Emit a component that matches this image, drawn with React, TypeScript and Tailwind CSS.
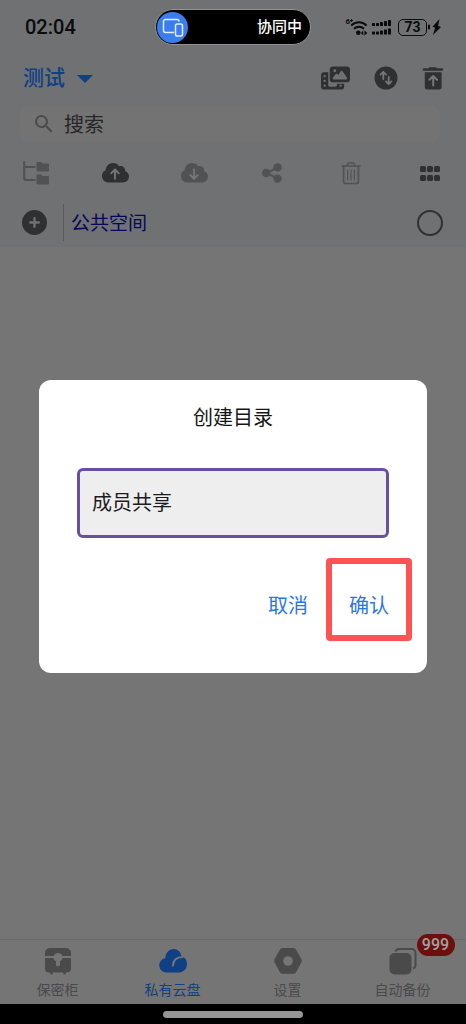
import { useState } from 'react';
import type { ReactNode } from 'react';
import { FaPhotoFilm, FaCirclePlus } from 'react-icons/fa6';
import { MdSearch } from 'react-icons/md';

function SwapIcon() {
  return (
    <svg viewBox="0 0 24 24" className="size-6">
      <circle cx="12" cy="12" r="11.5" fill="currentColor" />
      <g fill="none" stroke="#747678" strokeWidth="1.8" strokeLinecap="round" strokeLinejoin="round">
        <path d="M9.3 13V6.3M6.5 8.6l2.8-2.8 2.8 2.8" />
        <path d="M14.7 11v6.7M11.9 15.4l2.8 2.8 2.8-2.8" />
      </g>
    </svg>
  );
}

function RestoreIcon() {
  return (
    <svg viewBox="0 0 22 24" className="h-6 w-[22px]">
      <path d="M7.5 1.2h6.4l.8 1h5.2a1.3 1.3 0 0 1 0 2.6H2a1.3 1.3 0 0 1 0-2.6h4.7z" fill="currentColor" />
      <path d="M2.8 6.2h16.8v15a2.3 2.3 0 0 1-2.3 2.3H5.1a2.3 2.3 0 0 1-2.3-2.3z" fill="currentColor" />
      <path d="M11.2 19.5v-9M7.4 13.8l3.8-3.8 3.8 3.8" fill="none" stroke="#747678" strokeWidth="2" strokeLinecap="round" strokeLinejoin="round" />
    </svg>
  );
}

function FolderTreeIcon() {
  return (
    <svg viewBox="0 0 26 24" className="h-6 w-[26px]" fill="currentColor">
      <path d="M1.2 1.200V17a2 2 0 0 0 2 2h8.500M1.200 6h10.500" fill="none" stroke="currentColor" strokeWidth="2.200" strokeLinecap="round" />
      <path d="M14.500 1h3.700l1.600 1.500H25a1 1 0 0 1 1 1V9.500a1 1 0 0 1-1 1H14.500a1 1 0 0 1-1-1V2a1 1 0 0 1 1-1z" />
      <path d="M14.500 13.500h3.700l1.600 1.500H25a1 1 0 0 1 1 1v6.500a1 1 0 0 1-1 1H14.500a1 1 0 0 1-1-1v-8a1 1 0 0 1 1-1z" />
    </svg>
  );
}

function CloudArrowIcon({ down }: { down?: boolean }) {
  return (
    <svg viewBox="0 0 28 22" className="h-[22px] w-7">
      <path d="M7 20.500A6.500 6.500 0 0 1 4.600 8.200C5 4 8 1 12 1c2.600 0 4.800 1.200 6.200 3.200 3.400-.7 6.200 1.600 6 4.800 2.300.9 3.800 3 3.800 5.500a6 6 0 0 1-6 6z" fill="currentColor" />
      <path
        d={down ? 'M14 7.500v9M10.200 13l3.800 3.800 3.800-3.800' : 'M14 16.800v-9M10.200 11.300 14 7.500l3.800 3.800'}
        fill="none"
        stroke="#747678"
        strokeWidth="1.900"
        strokeLinecap="round"
        strokeLinejoin="round"
      />
    </svg>
  );
}

function ShareIcon() {
  return (
    <svg viewBox="0 0 20 20" className="size-5" fill="currentColor">
      <path d="M15.500 4.500 4.500 10l11 5.500" fill="none" stroke="currentColor" strokeWidth="2" />
      <circle cx="4.200" cy="10" r="4.200" />
      <circle cx="15.600" cy="4.400" r="4.200" />
      <circle cx="15.600" cy="15.600" r="4.200" />
    </svg>
  );
}

function TrashIcon() {
  return (
    <svg viewBox="0 0 20 24" className="h-6 w-5" fill="none" stroke="currentColor" strokeLinecap="round" strokeLinejoin="round">
      <path d="M1 5h18" strokeWidth="1.6" />
      <path d="M6 4.6 7.2 2h5.6L14 4.6" strokeWidth="1.4" />
      <path d="M2.6 5.2v15.3a2 2 0 0 0 2 2h10.8a2 2 0 0 0 2-2V5.2" strokeWidth="1.7" />
      <path d="M6.6 9v10M10 9v10M13.4 9v10" strokeWidth="1.2" />
    </svg>
  );
}

function GridIcon() {
  return (
    <svg viewBox="0 0 20 15" className="h-[15px] w-5" fill="currentColor">
      {[0, 7, 14].map((x) => (
        <g key={x}>
          <rect x={x} y="0" width="6" height="6" rx="1.5" />
          <rect x={x} y="9" width="6" height="6" rx="1.5" />
        </g>
      ))}
    </svg>
  );
}

function ChestIcon() {
  return (
    <svg viewBox="0 0 28 28" className="size-7" fill="currentColor">
      <path d="M6 1h16a5 5 0 0 1 5 5v3h-8.800a4.500 4.500 0 0 0-8.400 0H1V6a5 5 0 0 1 5-5z" />
      <path d="M1 11h8.500c.3 1.500 1.200 2.700 2.500 3.300v3.200a2 2 0 0 0 4 0v-3.200c1.300-.6 2.200-1.800 2.500-3.300H27v10.500a4 4 0 0 1-4 4h-1l-.7 2h-1.600l-.7-2H9l-.7 2H6.700l-.7-2H5a4 4 0 0 1-4-4z" />
    </svg>
  );
}

function CloudIcon() {
  return (
    <svg viewBox="0 0 28 28" className="size-7">
      <path d="M7 25.500A7.200 7.200 0 0 1 6.300 11.200C6.500 6 10 2 14.500 2c4 0 7.200 3 8 7.200 3.200.6 5.500 4 5.500 7.600 0 5-3.500 8.700-8 8.700z" fill="currentColor" />
      <path d="M14 18.500c0-5.200 3.500-8.600 9.500-8.600" fill="none" stroke="#757575" strokeWidth="2" strokeLinecap="round" />
    </svg>
  );
}

function NutIcon() {
  return (
    <svg viewBox="0 0 28 28" className="size-7">
      <path
        fill="currentColor"
        fillRule="evenodd"
        d="M8.500 1h11a3 3 0 0 1 2.600 1.500l5.300 9.800a3 3 0 0 1 0 3l-5.300 10a3 3 0 0 1-2.600 1.500h-11a3 3 0 0 1-2.600-1.500L.6 15.300a3 3 0 0 1 0-3l5.300-9.800A3 3 0 0 1 8.500 1zM14 9.200a4.800 4.800 0 1 0 0 9.600 4.800 4.800 0 0 0 0-9.600z"
      />
    </svg>
  );
}

function CopiesIcon() {
  return (
    <svg viewBox="0 0 28 28" className="size-7">
      <rect x=".5" y="6" width="22" height="21.500" rx="5" fill="currentColor" />
      <path d="M6.500 4.500A4 4 0 0 1 10 2h12.500a4 4 0 0 1 4 4v12a4 4 0 0 1-2.500 3.600" fill="none" stroke="currentColor" strokeWidth="2" />
    </svg>
  );
}

function StatusBar() {
  return (
    <div className="grid h-[54px] grid-cols-[1fr_auto_1fr] items-center pr-[25px] pl-[25px]">
      <span className="text-xl font-medium text-[#0b0b0c]">02:04</span>
      <div className="flex h-9 w-[156px] items-center justify-between rounded-full border border-[#929292] bg-black pr-2 pl-px">
        <span className="flex size-[31px] items-center justify-center rounded-full bg-[#3b7df0]">
          <svg viewBox="0 0 22 20" className="h-5 w-[22px]" fill="none" stroke="#e4eeff" strokeWidth="1.500">
            <path d="M12 15.500H3.500a2 2 0 0 1-2-2v-9a2 2 0 0 1 2-2H15a2 2 0 0 1 2 2" />
            <rect x="13.500" y="7" width="7" height="12" rx="1.800" />
          </svg>
        </span>
        <span className="text-[15px] font-medium text-white">协同中</span>
      </div>
      <div className="flex items-center justify-end text-[#0b0b0c]">
        <span className="self-start text-[8px] leading-none font-bold">6</span>
        <svg viewBox="0 0 18 18" className="mr-1 h-[18px] w-[18px]" fill="none" stroke="currentColor">
          <path d="M0 2.500h3M1.500 1v3" strokeWidth=".9" />
          <path d="M1.200 7.600c4.200-4.400 11.200-4.400 15.400 0" strokeWidth="2" />
          <path d="M4 10.800c2.900-2.800 7.100-2.800 10 0" strokeWidth="2" />
          <circle cx="8.300" cy="14.800" r="2.300" fill="currentColor" stroke="none" />
          <path d="m13.300 12.600-2.300 2.400 2.300 2.400zM14.500 12.600l2.800 2.400-2.800 2.400z" fill="currentColor" stroke="none" />
        </svg>
        <svg viewBox="0 0 20 16" className="mr-1.5 h-4 w-5" fill="currentColor">
          {[3, 3, 4, 5, 6].map((h, i) => (
            <g key={i}>
              <rect x={i * 4} y={7 - h} width="3" height={h} rx=".6" />
              <rect x={i * 4} y={15.500 - h} width="3" height={h} rx=".6" />
            </g>
          ))}
        </svg>
        <span className="flex h-[17px] w-[29px] items-center justify-center rounded-[5px] border border-current text-sm font-bold">73</span>
        <svg viewBox="0 0 14 18" className="h-[18px] w-[14px]" fill="currentColor">
          <rect x="1" y="6.500" width="2" height="5" rx="1" />
          <path d="M12.500 1 5.500 8.800l2.600 1L6 17l8-8-2.800-1z" />
        </svg>
      </div>
    </div>
  );
}

function ToolButton({ label, active, children }: { label: string; active?: boolean; children: ReactNode }) {
  return (
    <button
      type="button"
      aria-label={label}
      className={`flex h-7 w-7 items-center justify-center ${active ? 'text-[#2f3032]' : 'text-[#515253]'}`}
    >
      {children}
    </button>
  );
}

const tabs = [
  { name: '保密柜', icon: <ChestIcon /> },
  { name: '私有云盘', icon: <CloudIcon />, active: true },
  { name: '设置', icon: <NutIcon /> },
  { name: '自动备份', icon: <CopiesIcon />, badge: 999 },
];

export default function App() {
  const [folderName, setFolderName] = useState('成员共享');

  return (
    <div className="relative flex min-h-screen flex-col bg-[#757575] font-['Roboto','Noto_Sans_CJK_SC',sans-serif]">
      <header className="bg-[#6f7173] pb-1.5">
        <StatusBar />

        <div className="flex h-12 items-center justify-between pr-[22px] pl-[23px]">
          <button type="button" className="flex items-center gap-3 pt-0.5 text-[21px] font-medium text-[#0f3f85]">
            测试
            <svg viewBox="0 0 16 8" className="h-2 w-4" fill="currentColor">
              <path d="M0 0h16L8 8z" />
            </svg>
          </button>
          <div className="flex items-center gap-6 text-[#2f3032]">
            <button type="button" aria-label="相册"><FaPhotoFilm className="h-6 w-[29px]" /></button>
            <button type="button" aria-label="传输"><SwapIcon /></button>
            <button type="button" aria-label="回收站"><RestoreIcon /></button>
          </div>
        </div>

        <label className="mr-[26px] ml-5 mt-1 flex h-9 items-center gap-2 rounded-lg bg-[#737373] pl-3">
          <MdSearch className="size-6 text-[#4b4b4b]" />
          <input
            type="text"
            aria-label="搜索"
            placeholder="搜索"
            className="min-w-0 flex-1 bg-transparent pt-0.5 text-xl outline-none placeholder:text-[#262628]"
          />
        </label>

        <div className="flex h-[62px] items-center justify-between px-[22px]">
          <ToolButton label="目录"><FolderTreeIcon /></ToolButton>
          <ToolButton label="上传" active><CloudArrowIcon /></ToolButton>
          <ToolButton label="下载"><CloudArrowIcon down /></ToolButton>
          <ToolButton label="分享"><ShareIcon /></ToolButton>
          <ToolButton label="删除"><TrashIcon /></ToolButton>
          <ToolButton label="视图" active><GridIcon /></ToolButton>
        </div>

        <div className="flex h-[37px] items-center pr-[23px] pl-[22px]">
          <button type="button" aria-label="新建" className="text-[#2f3032]">
            <FaCirclePlus className="size-[25px]" />
          </button>
          <span className="ml-4 flex h-full flex-1 items-center border-l border-[#58595b] pt-1 pl-[7px] text-[19px] text-[#06065c]">
            公共空间
          </span>
          <input
            type="checkbox"
            aria-label="选择公共空间"
            className="size-[26px] appearance-none rounded-full border-2 border-[#2f3032]"
          />
        </div>
      </header>

      <main className="flex-1" />

      <nav className="flex h-[65px] border-t border-[#6a6a6a] pr-1.5">
        {tabs.map((tab) => (
          <a
            key={tab.name}
            href="#"
            className={`relative flex flex-1 flex-col items-center gap-[5px] pt-[7px] text-sm ${tab.active ? 'text-[#0f3f85]' : 'text-[#4a4a4a]'}`}
          >
            {tab.icon}
            {tab.name}
            {tab.badge && (
              <span className="absolute -top-1.5 left-1/2 ml-3.5 flex h-[22px] w-[38px] items-center justify-center rounded-full bg-[#6b0f0f] text-base font-medium text-[#a5a0a0]">
                {tab.badge}
              </span>
            )}
          </a>
        ))}
      </nav>
      <footer className="flex h-5 items-center justify-center bg-black">
        <span className="h-[7px] w-[140px] rounded-full bg-[#969696]" />
      </footer>

      {/* Create folder dialog */}
      <div className="absolute inset-0 flex items-center justify-center px-[39px] pt-12 pb-5">
        <form
          role="dialog"
          aria-labelledby="dialog-title"
          onSubmit={(e) => e.preventDefault()}
          className="w-full rounded-xl bg-white px-[38px] pt-6 pb-8"
        >
          <h2 id="dialog-title" className="text-center text-xl leading-7 text-[#161616]">创建目录</h2>
          <input
            type="text"
            aria-labelledby="dialog-title"
            value={folderName}
            onChange={(e) => setFolderName(e.target.value)}
            className="mt-9 h-[70px] w-full rounded-md border-[3px] border-[#6750a4] bg-[#eeeeee] px-3 pb-0.5 text-xl text-[#1c1b1f] outline-none"
          />
          <div className="-mr-[23px] mt-5 flex justify-end gap-[18px] text-xl text-[#2478e8]">
            <button type="button" className="pt-3.5">取消</button>
            <button type="submit" className="h-[83px] w-[86px] rounded-[4px] border-[6px] border-[#ff5252] pt-3.5">确认</button>
          </div>
        </form>
      </div>
    </div>
  );
}
